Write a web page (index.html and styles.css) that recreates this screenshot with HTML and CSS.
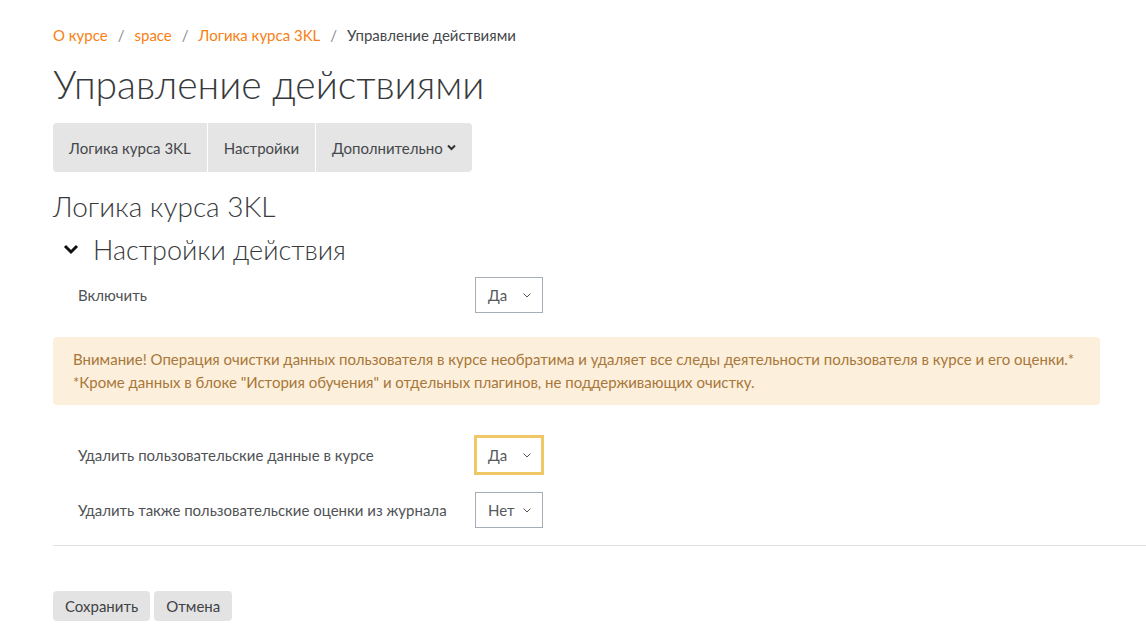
FILE: index.html
```html
<!DOCTYPE html>
<html lang="ru">
<head>
    <meta charset="UTF-8">
    <meta name="viewport" content="width=device-width, initial-scale=1.0">
    <title>Управление действиями</title>
    <link rel="stylesheet" href="styles.css">
</head>
<body>
    <div class="page">
        <nav class="breadcrumb">
            <a href="#">О курсе</a>
            <span class="sep">/</span>
            <a href="#">space</a>
            <span class="sep">/</span>
            <a href="#">Логика курса 3KL</a>
            <span class="sep">/</span>
            <span class="current">Управление действиями</span>
        </nav>

        <h1 class="page-title">Управление действиями</h1>

        <div class="tabs">
            <a class="tab" href="#">Логика курса 3KL</a>
            <a class="tab" href="#">Настройки</a>
            <a class="tab" href="#">Дополнительно
                <svg class="caret" width="9" height="7" viewBox="0 0 9 7"><path d="M1 1.5l3.5 3.5 3.5-3.5" fill="none" stroke="#333" stroke-width="2"/></svg>
            </a>
        </div>

        <h2 class="section-title">Логика курса 3KL</h2>

        <form class="mform">
            <div class="fieldset-head">
                <svg class="collapse-icon" width="16" height="12" viewBox="0 0 16 12"><path d="M2 3l6 6 6-6" fill="none" stroke="#111" stroke-width="3"/></svg>
                <h3>Настройки действия</h3>
            </div>

            <div class="form-row">
                <label>Включить</label>
                <div class="select">Да
                    <svg class="chev" width="8" height="5" viewBox="0 0 8 5"><path d="M0.5 0.5l3.5 3.5 3.5-3.5" fill="none" stroke="#555" stroke-width="1"/></svg>
                </div>
            </div>

            <div class="alert">
                Внимание! Операция очистки данных пользователя в курсе необратима и удаляет все следы деятельности пользователя в курсе и его оценки.*<br>
                *Кроме данных в блоке "История обучения" и отдельных плагинов, не поддерживающих очистку.
            </div>

            <div class="form-row first">
                <label>Удалить пользовательские данные в курсе</label>
                <div class="select focused">Да
                    <svg class="chev" width="8" height="5" viewBox="0 0 8 5"><path d="M0.5 0.5l3.5 3.5 3.5-3.5" fill="none" stroke="#555" stroke-width="1"/></svg>
                </div>
            </div>

            <div class="form-row">
                <label>Удалить также пользовательские оценки из журнала</label>
                <div class="select">Нет
                    <svg class="chev" width="8" height="5" viewBox="0 0 8 5"><path d="M0.5 0.5l3.5 3.5 3.5-3.5" fill="none" stroke="#555" stroke-width="1"/></svg>
                </div>
            </div>

            <hr class="divider">

            <div class="buttons">
                <button type="button" class="btn">Сохранить</button>
                <button type="button" class="btn">Отмена</button>
            </div>
        </form>
    </div>
</body>
</html>
```

FILE: styles.css
```css
body{
    margin:0;
    padding:0;
    font-family: Lato, "Open Sans", sans-serif;
    color:#373a3c;
    background:#fff;
}

.page{
    padding:24px 46px 0 53px;
}

.breadcrumb{
    font-size:15px;
    line-height:22px;
    display:flex;
    gap:10px;
}

.breadcrumb a{
    color:#f98012;
    text-decoration:none;
}

.breadcrumb .sep{
    color:#8a8d90;
}

.breadcrumb .current{
    color:#45484b;
}

.page-title{
    font-size:39px;
    font-weight:300;
    margin:15px 0 16px;
    line-height:46px;
}

.tabs{
    display:inline-flex;
    background:#e5e5e5;
    border-radius:4px;
    height:49px;
}

.tab{
    display:flex;
    align-items:center;
    gap:4px;
    padding:0 16px;
    color:#45484b;
    text-decoration:none;
    font-size:15px;
    border-left:1px solid #fff;
}

.tab:first-child{
    border-left:none;
}

.section-title{
    font-size:28px;
    font-weight:300;
    margin:16px 0 0;
    line-height:36px;
}

.fieldset-head{
    display:flex;
    align-items:center;
    padding-left:10px;
    margin-top:4px;
    height:42px;
}

.fieldset-head h3{
    font-size:27px;
    font-weight:300;
    margin:0 0 0 14px;
}

.form-row{
    display:grid;
    grid-template-columns:397px auto;
    align-items:center;
    padding-left:25px;
    margin-top:7px;
}

.form-row.first{
    margin-top:30px;
}

.form-row + .form-row{
    margin-top:17px;
}

.form-row label{
    font-size:15px;
    color:#505356;
}

.select{
    box-sizing:border-box;
    height:36px;
    width:68px;
    border:1px solid #a5adb6;
    display:flex;
    align-items:center;
    justify-content:space-between;
    padding:0 11px 0 12px;
    font-size:15px;
    color:#55595c;
}

.select.focused{
    border:3px solid #f0c766;
    height:40px;
    width:70px;
    margin-left:-1px;
    padding:0 10px 0 11px;
}

.alert{
    margin-top:24px;
    background:#fcefdc;
    color:#a8773a;
    border-radius:4px;
    padding:11px 20px 11px;
    font-size:15px;
    line-height:23px;
}

.divider{
    border:none;
    border-top:1px solid #dee2e6;
    margin:17px -46px 0 0;
}

.buttons{
    display:flex;
    gap:4px;
    margin-top:45px;
}

.btn{
    background:#e3e3e3;
    border:none;
    border-radius:4px;
    height:30px;
    padding:0 12px;
    font-family:inherit;
    font-size:15px;
    color:#3f4245;
}
```
